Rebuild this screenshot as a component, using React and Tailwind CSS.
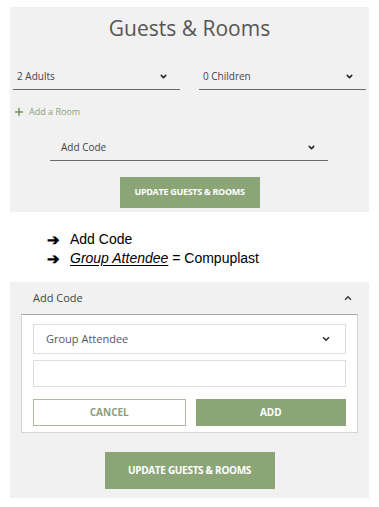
import { ChevronDown, ChevronUp, Plus } from "lucide-react";

const font = { fontFamily: '"Open Sans", "Noto Sans", sans-serif' };

const LineSelect = ({ label, className }) => (
  <div className={`flex items-center justify-between border-b border-[#6b6b6b] h-[26px] pl-1 pr-3 ${className}`}>
    <span className="text-[10px] text-[#444]">{label}</span>
    <ChevronDown size={9} strokeWidth={4} className="text-[#222]" />
  </div>
);

export default function App() {
  return (
    <div className="w-[379px] h-[507px] bg-white pt-[7px]" style={font}>
      <div className="mx-[10px] bg-[#f1f1f1] h-[205px] flex flex-col">
        <h1 className="text-center text-[21px] text-[#555] mt-[6px] leading-[30px]">Guests &amp; Rooms</h1>
        <div className="flex gap-[19px] px-[3px] mt-[21px]">
          <LineSelect label="2 Adults" className="w-[167px]" />
          <LineSelect label="0 Children" className="w-[167px]" />
        </div>
        <div className="flex items-center gap-[4px] px-[3px] mt-[15px] text-[#6f8c5e]">
          <Plus size={12} strokeWidth={2.75} />
          <span className="text-[9px] text-[#8ca07c]">Add a Room</span>
        </div>
        <LineSelect label="Add Code" className="w-[278px] ml-[40px] mt-[16px] pl-[11px]" />
        <button className="self-center w-[140px] h-[31px] mt-[16px] bg-[#8ba577] text-white text-[9px] font-bold tracking-[-0.3px]">
          UPDATE GUESTS &amp; ROOMS
        </button>
      </div>

      <div className="pl-[47px] pt-[18px] text-[14px] text-black leading-[19px]" style={{ fontFamily: '"Liberation Sans", Arial, sans-serif' }}>
        <div className="flex items-center">
          <span className="w-[23px] font-bold text-[15px]">➔</span>
          <span>Add Code</span>
        </div>
        <div className="flex items-center">
          <span className="w-[23px] font-bold text-[15px]">➔</span>
          <span className="italic underline underline-offset-2">Group Attendee </span>
          <span>&nbsp;= Compuplast</span>
        </div>
      </div>

      <div className="mx-[10px] mt-[14px] bg-[#f1f1f1] h-[216px] flex flex-col">
        <div className="flex items-center justify-between pl-[23px] pr-[16px] h-[32px]">
          <span className="text-[11px] text-[#444]">Add Code</span>
          <ChevronUp size={10} strokeWidth={4} className="text-[#444]" />
        </div>
        <div className="mx-[11px] bg-white border border-[#d4d4d4] border-t-[#a8a8a8] px-[11px] pt-[9px] pb-[6px] flex flex-col">
          <div className="flex items-center justify-between h-[30px] border border-[#ddd] pl-[12px] pr-[14px]">
            <span className="text-[11px] text-[#555]">Group Attendee</span>
            <ChevronDown size={10} strokeWidth={4} className="text-[#333]" />
          </div>
          <div className="h-[27px] mt-[6px] border border-[#ddd]" />
          <div className="flex gap-[10px] mt-[12px]">
            <button className="flex-1 h-[27px] border border-[#a9bb9b] text-[#8d9c80] text-[10px] font-bold">CANCEL</button>
            <button className="flex-1 h-[27px] bg-[#8ba577] text-white text-[10px] font-bold">ADD</button>
          </div>
        </div>
        <button className="self-center w-[170px] h-[37px] mt-[19px] bg-[#8ba577] text-white text-[10px] font-bold tracking-[-0.3px]">
          UPDATE GUESTS &amp; ROOMS
        </button>
      </div>
    </div>
  );
}
